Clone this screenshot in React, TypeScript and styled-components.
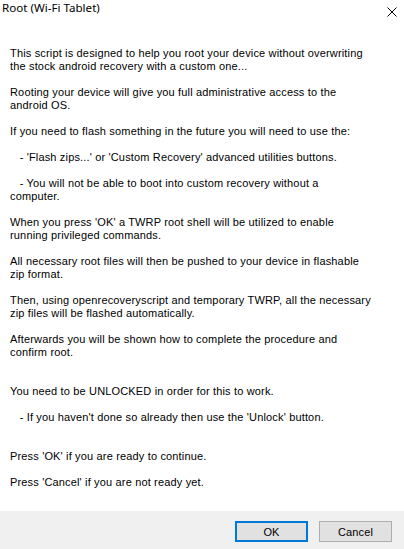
import React from 'react';
import styled, {createGlobalStyle} from 'styled-components';

const GlobalStyle = createGlobalStyle`
  html, body {
    margin: 0;
    padding: 0;
    background: #ffffff;
  }
`

const Window = styled.div`
  display: flex;
  flex-direction: column;
  width: 404px;
  height: 549px;
  background: #ffffff;
  overflow: hidden;
`

const TitleBar = styled.div`
  display: flex;
  justify-content: space-between;
  align-items: flex-start;
  height: 24px;
`

const Title = styled.span`
  padding-left: 2px;
  font-family: "Noto Sans", "Open Sans", sans-serif;
  font-size: 11.6px;
  line-height: 16px;
  color: #000000;
`

const CloseButton = styled.button`
  display: flex;
  margin: 7px 7px 0 0;
  padding: 0;
  border: none;
  background: transparent;
  cursor: pointer;
`

const Body = styled.div`
  flex: 1;
  padding: 23px 10px 0;
  font-family: "Liberation Sans", Arial, sans-serif;
  font-size: 11px;
  letter-spacing: 0.16px;
  line-height: 13px;
  color: #000000;
  white-space: pre;
`

const Footer = styled.div`
  display: flex;
  justify-content: flex-end;
  align-items: flex-start;
  gap: 11px;
  height: 38px;
  padding: 10px 12px 0 0;
  box-sizing: border-box;
  background: #f0f0f0;
`

const DialogButton = styled.button<{ $default?: boolean }>`
  width: 73px;
  height: 21px;
  box-sizing: border-box;
  padding: 0;
  background: #e1e1e1;
  border: ${p => p.$default ? '2px solid #0078d7' : '1px solid #adadad'};
  font-family: "Liberation Sans", Arial, sans-serif;
  font-size: 11px;
  letter-spacing: 0.16px;
  color: #000000;
  cursor: pointer;
`

const message = `This script is designed to help you root your device without overwriting
the stock android recovery with a custom one...

Rooting your device will give you full administrative access to the
android OS.

If you need to flash something in the future you will need to use the:

   - 'Flash zips...' or 'Custom Recovery' advanced utilities buttons.

   - You will not be able to boot into custom recovery without a
computer.

When you press 'OK' a TWRP root shell will be utilized to enable
running privileged commands.

All necessary root files will then be pushed to your device in flashable
zip format.

Then, using openrecoveryscript and temporary TWRP, all the necessary
zip files will be flashed automatically.

Afterwards you will be shown how to complete the procedure and
confirm root.


You need to be UNLOCKED in order for this to work.

   - If you haven't done so already then use the 'Unlock' button.


Press 'OK' if you are ready to continue.

Press 'Cancel' if you are not ready yet.`

const App = () => (
    <>
        <GlobalStyle/>
        <Window>
            <TitleBar>
                <Title>Root (Wi-Fi Tablet)</Title>
                <CloseButton aria-label="Close">
                    <svg width="10" height="10" viewBox="0 0 10 10">
                        <path d="M0.5 0.5 L9.5 9.5 M9.5 0.5 L0.5 9.5" stroke="#000" strokeWidth="1" fill="none"/>
                    </svg>
                </CloseButton>
            </TitleBar>
            <Body>{message}</Body>
            <Footer>
                <DialogButton $default>OK</DialogButton>
                <DialogButton>Cancel</DialogButton>
            </Footer>
        </Window>
    </>
);

export default App;
